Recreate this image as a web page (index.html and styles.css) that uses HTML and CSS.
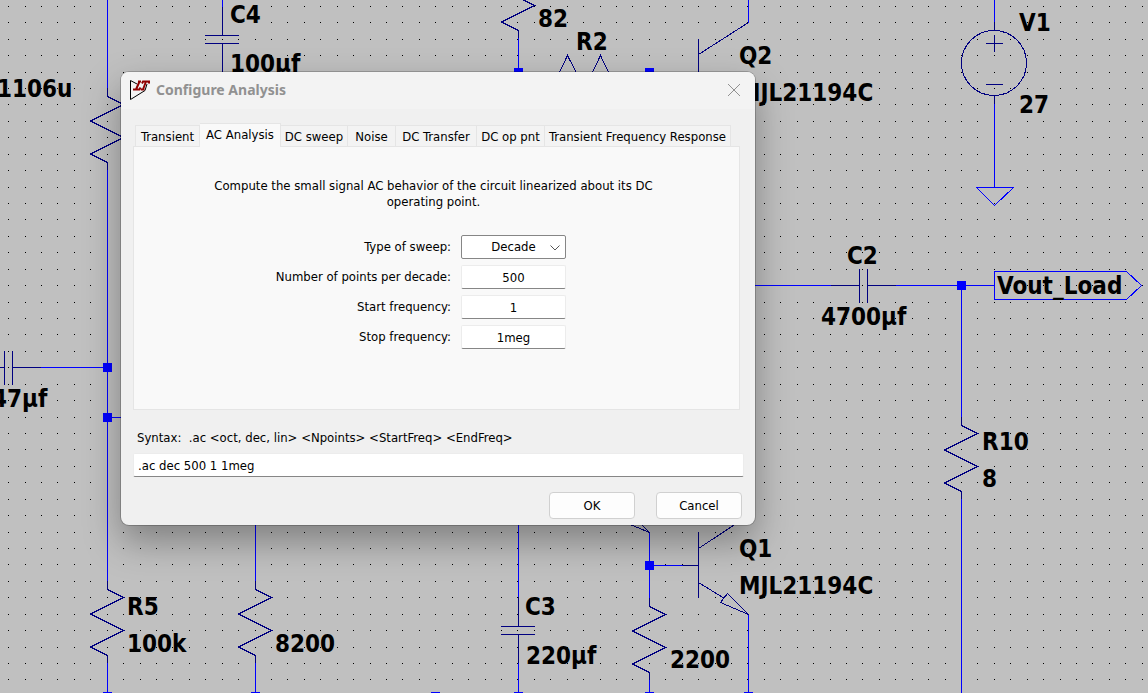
FILE: index.html
```html
<!DOCTYPE html>
<html lang="en">
<head>
<meta charset="utf-8">
<title>Configure Analysis</title>
<link rel="stylesheet" href="styles.css">
</head>
<body>
<main class="workspace">
  <svg class="schematic" aria-label="Circuit schematic">
    <defs>
      <pattern id="grid" x="8" y="6" width="115" height="115" patternUnits="userSpaceOnUse">
        <path id="grid-row" class="dot" d="M0 0h1v1h-1zM17 0h1v1h-1zM33 0h1v1h-1zM49 0h1v1h-1zM66 0h1v1h-1zM82 0h1v1h-1zM99 0h1v1h-1z"/>
        <use href="#grid-row" y="16"/>
        <use href="#grid-row" y="33"/>
        <use href="#grid-row" y="49"/>
        <use href="#grid-row" y="66"/>
        <use href="#grid-row" y="82"/>
        <use href="#grid-row" y="98"/>
      </pattern>
      <path id="resistor" d="M.5 0V8.500L16.500 16.500L-16.500 33L16.500 49.500L-16.500 66L.5 74.500V82"/>
    </defs>
    <rect width="100%" height="100%" fill="url(#grid)"/>

    <g class="wire">
      <path d="M107.500 0V88M107.500 170V582M107.500 663V693M41 367.500H107M107 417.500H130"/>
      <path d="M222.500 0V7M255.500 500V582M255.500 663V693"/>
      <path d="M518.500 38V70M518.500 520V597M518.500 663V693"/>
      <path d="M748.500 0V23M748.500 614V693"/>
      <path d="M649.500 532V598M649.500 680V693M649 565.500H683"/>
      <path d="M994.500 0V22M994.500 104V187M976.500 187.500H1013.500L994.500 205.500Z"/>
      <path d="M750 285.500H831M896 285.500H994M961.500 285V418M961.500 499V693"/>
      <path d="M994.500 271.500H1126.500L1141.500 285.500L1126.500 299.500H994.500Z"/>
    </g>

    <g class="part">
      <use href="#resistor" x="107" y="88"/>
      <use href="#resistor" x="107" y="581"/>
      <use href="#resistor" x="255" y="581"/>
      <use href="#resistor" x="518" y="-44"/>
      <use href="#resistor" x="961" y="417"/>
      <use href="#resistor" x="649" y="598"/>
      <path d="M551.500 88.500L567.500 55.500L584.500 88.500L600.500 55.500L616.500 88.500"/>
      <path d="M222.500 7V35M205 35.500H239M205 43.500H239M222.500 43V80"/>
      <path d="M0 367.500H4M4.500 351V385M12.500 351V385M12 367.500H41"/>
      <path d="M518.500 597V626M501 626.500H535M501 634.500H535M518.500 634V663"/>
      <path d="M831 285.500H859M859.500 269V303M867.500 269V303M867 285.500H896"/>
      <path d="M698.500 39V90M698.500 54.500L748.500 22.500"/>
      <path d="M698.500 532V598M698.500 548.500L748.500 515.500M698.500 582.500L724.500 598.500M720.500 602.500L727.500 593.500L748.500 614.500ZM683 565.500H698"/>
      <path d="M625.500 522.500L649.500 532.500L628.500 511.500"/>
      <circle cx="994" cy="63" r="32.500"/>
      <path d="M994.500 22V30M994.500 95V104M986 43.500H1003M994.500 35V52M986 84.500H1003"/>
    </g>

    <g class="node">
      <rect x="103" y="363" width="9" height="9"/>
      <rect x="103" y="413" width="9" height="9"/>
      <rect x="514" y="68" width="9" height="9"/>
      <rect x="645" y="68" width="9" height="9"/>
      <rect x="645" y="561" width="9" height="9"/>
      <rect x="957" y="281" width="9" height="9"/>
      <rect x="103" y="692" width="9" height="9"/>
      <rect x="251" y="692" width="9" height="9"/>
      <rect x="431" y="692" width="9" height="9"/>
      <rect x="514" y="692" width="9" height="9"/>
      <rect x="645" y="692" width="9" height="9"/>
      <rect x="744" y="692" width="9" height="9"/>
    </g>

    <g class="label">
      <text x="230" y="23">C4</text>
      <text x="230" y="72">100µf</text>
      <text x="-3" y="97">1106u</text>
      <text x="538" y="27">82</text>
      <text x="576" y="50">R2</text>
      <text x="739" y="64">Q2</text>
      <text x="739" y="101">MJL21194C</text>
      <text x="1019" y="31">V1</text>
      <text x="1019" y="113">27</text>
      <text x="847" y="264">C2</text>
      <text x="821" y="325">4700µf</text>
      <text x="997" y="294">Vout_Load</text>
      <text x="982" y="450">R10</text>
      <text x="982" y="487">8</text>
      <text x="-8" y="407">47µf</text>
      <text x="127" y="615">R5</text>
      <text x="127" y="652">100k</text>
      <text x="275" y="652">8200</text>
      <text x="525" y="615">C3</text>
      <text x="526" y="664">220µf</text>
      <text x="739" y="557">Q1</text>
      <text x="739" y="594">MJL21194C</text>
      <text x="670" y="668">2200</text>
    </g>
  </svg>

  <section class="dialog" role="dialog" aria-labelledby="dialog-title">
    <header class="titlebar">
      <svg class="logo" viewBox="0 0 20 21" aria-hidden="true">
        <path class="logo-frame" d="M7 4L.5 .5V19.500L15 10.500L17 4"/>
        <path class="logo-mark" d="M8 1.500H11M9.500 1.500L6 9.500M3 9.500H9.500L10.500 7.500M12 3.500L13 1.500H19.500L18.500 3.500M16 1.500L13 9.500M11 9.500H14.500"/>
      </svg>
      <h1 class="title" id="dialog-title">Configure Analysis</h1>
      <button class="close" type="button" aria-label="Close">
        <svg class="close-icon" viewBox="0 0 14 14" aria-hidden="true"><path d="M1 1L13 13M13 1L1 13"/></svg>
      </button>
    </header>

    <form class="content">
      <div class="tabs" role="tablist">
        <button class="tab" type="button" role="tab">Transient</button>
        <button class="tab tab-active" type="button" role="tab" aria-selected="true">AC Analysis</button>
        <button class="tab" type="button" role="tab">DC sweep</button>
        <button class="tab" type="button" role="tab">Noise</button>
        <button class="tab" type="button" role="tab">DC Transfer</button>
        <button class="tab" type="button" role="tab">DC op pnt</button>
        <button class="tab" type="button" role="tab">Transient Frequency Response</button>
      </div>
      <div class="panel" role="tabpanel">
        <p class="intro">Compute the small signal AC behavior of the circuit linearized about its DC operating point.</p>
        <div class="fields">
          <label for="sweep">Type of sweep:</label>
          <div class="combo">
            <select class="field select" id="sweep"><option>Decade</option><option>Octave</option><option>Linear</option></select>
            <svg class="chevron" viewBox="0 0 10 6" aria-hidden="true"><path d="M.5 .5L5 5L9.500 .5"/></svg>
          </div>
          <label for="points">Number of points per decade:</label>
          <input class="field" id="points" type="text" value="500">
          <label for="start">Start frequency:</label>
          <input class="field" id="start" type="text" value="1">
          <label for="stop">Stop frequency:</label>
          <input class="field" id="stop" type="text" value="1meg">
        </div>
      </div>
      <label class="syntax" for="command">Syntax:&nbsp; .ac &lt;oct, dec, lin&gt; &lt;Npoints&gt; &lt;StartFreq&gt; &lt;EndFreq&gt;</label>
      <input class="field command" id="command" type="text" value=".ac dec 500 1 1meg">
      <div class="actions">
        <button class="action" type="button">OK</button>
        <button class="action" type="button">Cancel</button>
      </div>
    </form>
  </section>
</main>
</body>
</html>
```
FILE: styles.css
```css
* {
  box-sizing: border-box;
}

body {
  margin: 0;
  background: #c0c0c0;
  color: #000;
  font: 13px/16px "DejaVu Sans Condensed", "DejaVu Sans", sans-serif;
}

.workspace {
  position: relative;
  height: 100vh;
  overflow: hidden;
}

.schematic {
  display: block;
  width: 100%;
  height: 100%;
  shape-rendering: crispEdges;
}

.dot {
  fill: #000;
}

.wire {
  fill: none;
  stroke: #00f;
}

.part {
  fill: none;
  stroke: #000080;
}

.node {
  fill: #00f;
}

.label {
  font-size: 24px;
  font-weight: bold;
}

.dialog {
  position: absolute;
  left: 121px;
  top: 72px;
  width: 634px;
  border-radius: 8px;
  overflow: hidden;
  background: #f0f0f0;
  box-shadow: 0 0 0 1px rgba(0, 0, 0, 0.2), 0 16px 36px rgba(0, 0, 0, 0.34);
}

.titlebar {
  display: flex;
  align-items: center;
  height: 37px;
  padding: 0 14px 1px 9px;
  background: #f3f3f3;
}

.logo {
  width: 20px;
  height: 21px;
}

.logo-frame {
  fill: #f3f3f3;
  stroke: #000;
}

.logo-mark {
  fill: none;
  stroke: #900000;
  stroke-width: 2;
}

.title {
  flex: 1;
  margin: 0 0 0 6px;
  color: #919191;
  font: bold 14px/20px "Noto Sans", sans-serif;
}

.close {
  display: flex;
  padding: 0;
  border: 0;
  background: none;
}

.close-icon {
  width: 14px;
  height: 14px;
  fill: none;
  stroke: #919191;
}

.content {
  display: flex;
  flex-direction: column;
  padding: 14px 11px 6px 12px;
}

.tabs {
  display: grid;
  grid-template-columns: 65px 81px 67px 48px 81px 68px 186px;
  align-items: end;
  margin-bottom: -1px;
  padding-left: 2px;
}

.tab {
  height: 22px;
  padding: 2px 0 0;
  border: 1px solid #e5e5e5;
  border-left-width: 0;
  background: #f3f3f3;
  color: inherit;
  font: inherit;
  white-space: nowrap;
}

.tab:first-child {
  border-left-width: 1px;
}

.tab-active {
  position: relative;
  height: 24px;
  padding: 0 0 2px;
  border-bottom: 0;
  background: #f9f9f9;
}

.panel {
  min-height: 264px;
  margin-right: 4px;
  padding: 31px 82px 31px 76px;
  border: 1px solid #e5e5e5;
  background: #f9f9f9;
}

.intro {
  margin: 0 0 25px;
  text-align: center;
}

.fields {
  display: grid;
  grid-template-columns: 241px 105px;
  gap: 6px 10px;
  align-items: center;
  text-align: right;
}

.field {
  width: 100%;
  height: 24px;
  padding: 0 4px;
  border: 1px solid #ececec;
  border-bottom-color: #868686;
  border-radius: 2px;
  background: #fff;
  color: #000;
  font: inherit;
  text-align: center;
}

.combo {
  position: relative;
  height: 24px;
}

.select {
  appearance: none;
  border-color: #868686;
  text-align-last: center;
}

.chevron {
  position: absolute;
  right: 6px;
  top: 10px;
  width: 10px;
  height: 6px;
  fill: none;
  stroke: #555;
  pointer-events: none;
}

.syntax {
  margin: 20px 4px 7px;
}

.command {
  text-align: left;
}

.actions {
  display: flex;
  justify-content: flex-end;
  gap: 21px;
  margin: 15px 2px 0 0;
}

.action {
  width: 86px;
  height: 27px;
  padding: 0;
  border: 1px solid #d0d0d0;
  border-radius: 4px;
  background: #fdfdfd;
  color: inherit;
  font: inherit;
}
```
